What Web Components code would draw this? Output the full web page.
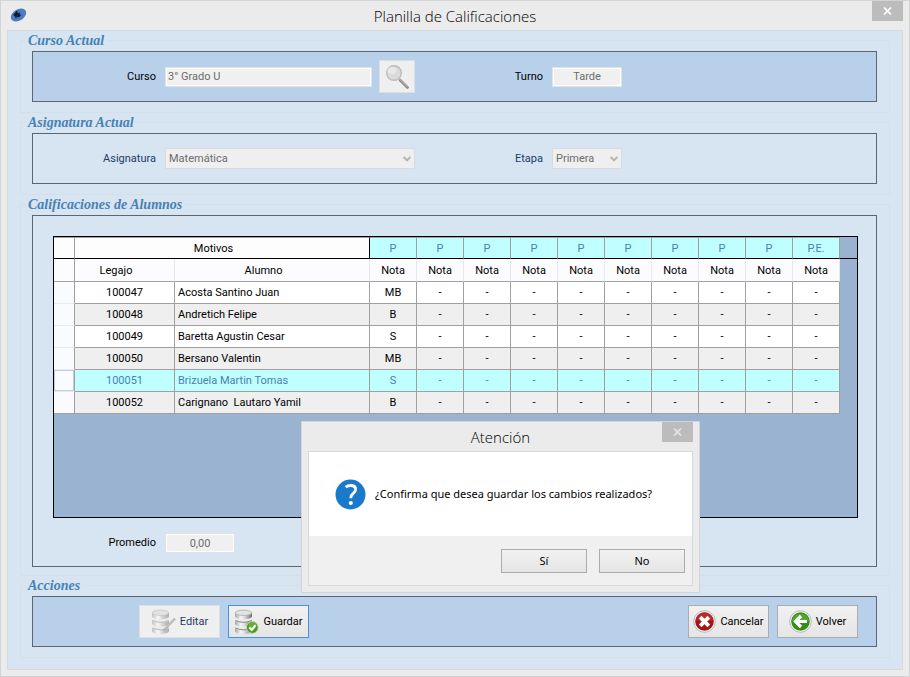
<!DOCTYPE html>
<html lang="es">
<head>
<meta charset="utf-8">
<title>Planilla de Calificaciones</title>
<style>
  body { margin: 0; font-family: Roboto, "Liberation Sans", sans-serif; font-size: 11px; line-height: 16px; color: #000; }
</style>
</head>
<body>
<school-grades-app></school-grades-app>

<script>
const define = (name, html, setup) => {
  const tpl = document.createElement('template');
  tpl.innerHTML = html;
  customElements.define(name, class extends HTMLElement {
    constructor() {
      super();
      this.attachShadow({ mode: 'open' }).append(tpl.content.cloneNode(true));
    }
    connectedCallback() { if (setup) setup(this, this.shadowRoot); }
  });
};

/* Window frame with title bar; used by the main form and by the message box */
define('window-frame', `
<style>
  :host { display: flex; flex-direction: column; box-sizing: border-box; background: #ebebeb; border: 1px solid #d2d4d6; padding: 0 6px 6px; }
  header { display: grid; grid-template-columns: 31px 1fr 31px; height: 29px; flex: none; }
  h1 { margin: 0; align-self: center; text-align: center; font: 300 15px/20px "Open Sans", "Noto Sans", sans-serif; color: #000; white-space: nowrap; }
  button { border: 0; padding: 0; height: 20px; background: #bcbcbc; color: #fff; display: grid; place-items: center; }
  :host([inactive]) button { color: #e6e6e6; }
  .logo { padding: 6px 0 0 3px; }
  main { flex: 1; display: flex; flex-direction: column; border: 1px solid #d5dade; background: var(--client, #d7e4f1); }
</style>
<header>
  <div class="logo"><slot name="logo"></slot></div>
  <h1></h1>
  <button type="button" aria-label="Cerrar"><svg width="9" height="8" viewBox="0 0 9 8"><path d="M1 .5 8 7.5M8 .5 1 7.5" stroke="currentColor" stroke-width="1.7"/></svg></button>
</header>
<main><slot></slot></main>`, (el, r) => { r.querySelector('h1').textContent = el.getAttribute('caption'); });

/* Titled group with an outlined panel inside */
define('group-panel', `
<style>
  :host { display: flex; flex-direction: column; }
  fieldset { flex: 1; display: block; min-width: 0; margin: 0; border: 1px solid #d6dfe6; padding: 1px 12px var(--below, 10px) 11px; }
  legend { padding: 0 4px 0 3px; margin-left: -7px; height: 19px; font: italic bold 14px/19px "Liberation Serif", serif; color: #4682b4; }
  .panel { box-sizing: border-box; min-height: 51px; border: 1px solid #5d656e; background: var(--panel, transparent); display: flex; flex-direction: column; justify-content: center; }
</style>
<fieldset><legend></legend><div class="panel"><slot></slot></div></fieldset>`,
(el, r) => { r.querySelector('legend').textContent = el.getAttribute('caption'); });

/* Row of label/field pairs */
define('field-row', `
<style>
  :host { display: grid; grid-template-columns: 123fr 250fr 119fr 70fr 245fr; column-gap: 9px; align-items: center; }
  :host([short]) { grid-template-columns: 123fr 70fr 632fr; }
</style><slot></slot>`);

define('text-field', `
<style>
  :host { display: contents; }
  label { text-align: right; }
  .area { display: flex; align-items: center; gap: 7px; min-width: 0; }
  input { box-sizing: border-box; flex: 1; min-width: 0; height: 20px; margin: 0; padding: 0 2px; border: 1px solid #dde3ea; box-shadow: inset 0 0 0 1px #fff; border-radius: 0; background: #f0f0f0; color: #6d6d6d; font: inherit; outline: 0; }
  :host([center]) input { text-align: center; }
</style>
<label for="f"></label><div class="area"><input id="f" type="text" disabled><slot></slot></div>`,
(el, r) => {
  r.querySelector('label').textContent = el.getAttribute('label');
  r.querySelector('input').value = el.getAttribute('value');
});

define('select-field', `
<style>
  :host { display: contents; }
  label { text-align: right; color: #1f3b66; }
  .area { display: grid; align-items: center; min-width: 0; }
  select, svg { grid-area: 1 / 1; }
  select { appearance: none; box-sizing: border-box; width: 100%; height: 21px; margin: 0; padding: 0 3px; border: 1px solid #d9dcde; border-radius: 0; background: #efefef; color: #6d6d6d; opacity: 1; font: inherit; }
  svg { justify-self: end; margin-right: 4px; pointer-events: none; }
</style>
<label for="s"></label>
<div class="area"><select id="s" disabled><option></option></select>
<svg width="8" height="6" viewBox="0 0 8 6"><path d="M.7 1 4 4.4 7.3 1" fill="none" stroke="#b4b4b4" stroke-width="2"/></svg></div>`,
(el, r) => {
  r.querySelector('label').textContent = el.getAttribute('label');
  r.querySelector('option').textContent = el.getAttribute('value');
});

/* Push button with an optional icon */
define('push-button', `
<style>
  :host { display: block; width: 81px; height: 33px; }
  button { box-sizing: border-box; width: 100%; height: 100%; display: flex; align-items: center; justify-content: center; gap: 4px; padding: 0 1px; margin: 0; border: 1px solid #acacac; border-radius: 0; background: linear-gradient(#f1f1f1, #e5e5e5); color: #000; font: inherit; white-space: nowrap; }
  button:disabled { background: #efefef; border-color: #dadfe4; color: #1f3b66; }
  :host([focused]) button { border-color: #4a90d9; }
</style>
<button type="button"><slot name="icon"></slot><slot></slot></button>`,
(el, r) => {
  const b = r.querySelector('button');
  b.disabled = el.hasAttribute('off');
  if (el.hasAttribute('hint')) b.setAttribute('aria-label', el.getAttribute('hint'));
});

/* Grades table */
define('grades-table', `
<style>
  :host { display: block; border: 1px solid #000; background: #9ab3d1; height: 280px; }
  table { width: 100%; table-layout: fixed; border-collapse: separate; border-spacing: 0; }
  th, td { box-sizing: border-box; height: 22px; padding: 0; font-weight: 400; text-align: center; line-height: 16px; white-space: pre; border: 0 solid #a0a0a0; border-right-width: 1px; border-bottom-width: 1px; }
  .c-mark { width: 21px; } .c-id { width: 100px; } .c-name { width: 195px; } .c-note { width: 47px; }
  .top th, .top td { border-bottom-color: #000; background: #c0ffff; color: #4682b4; border-top: 1px solid #a0a0a0; padding-top: 1px; }
  .top .corner, .top .motivos { background: #fdfdfd; color: #000; }
  .top .motivos { border-right-color: #000; padding-right: 17px; }
  .sub th { height: 23px; background: #fcfcfe; border-right-color: #e6eaf3; padding-top: 1px; }
  .sub .corner { border-right-color: #a0a0a0; }
  .sub .id, .sub .name { padding-right: 17px; }
  tbody td { background: #fff; }
  tbody tr:nth-child(even) td { background: #efefef; }
  tbody tr td.name { text-align: left; padding-left: 3px; }
  tbody tr td.mark, tbody tr:nth-child(even) td.mark { background: #fafbfe; border-bottom-color: #e6eaf3; }
  tbody tr.sel td { background: #c0ffff; color: #4682b4; }
  tbody tr.sel td.mark { background: #fafbfe; box-shadow: inset 1px 1px #c5cbdc, inset -1px -1px #c5cbdc; }
  tbody tr:last-child td.mark { border-bottom-color: #a0a0a0; }
  tr td.rest, tbody tr:nth-child(even) td.rest, tbody tr.sel td.rest { background: none; border: 0; }
  .top td.rest { border-bottom: 1px solid #000; }
</style>
<table>
  <colgroup><col class="c-mark"><col class="c-id"><col class="c-name"><col class="c-note" span="10"><col></colgroup>
  <thead><tr class="top"></tr><tr class="sub"></tr></thead>
  <tbody></tbody>
</table>`, (el, r) => {
  const ten = f => Array.from({ length: 10 }, (_, i) => f(i)).join('');
  r.querySelector('.top').innerHTML = '<th class="corner"></th><th class="motivos" colspan="2">Motivos</th>' + ten(i => `<th>${i < 9 ? 'P' : 'P.E.'}</th>`) + '<td class="rest"></td>';
  r.querySelector('.sub').innerHTML = '<th class="corner"></th><th class="id">Legajo</th><th class="name">Alumno</th>' + ten(() => '<th>Nota</th>') + '<td class="rest"></td>';
  const rows = [
    ['100047', 'Acosta Santino Juan', 'MB'], ['100048', 'Andretich Felipe', 'B'],
    ['100049', 'Baretta Agustin Cesar', 'S'], ['100050', 'Bersano Valentin', 'MB'],
    ['100051', 'Brizuela Martin Tomas', 'S'], ['100052', 'Carignano  Lautaro Yamil', 'B']];
  r.querySelector('tbody').innerHTML = rows.map(([id, name, n], k) =>
    `<tr${k === 4 ? ' class="sel"' : ''}><td class="mark"></td><td>${id}</td><td class="name">${name}</td>` +
    ten(i => `<td>${i ? '-' : n}</td>`) + '<td class="rest"></td></tr>').join('');
});

/* Confirmation message box */
define('message-box', `
<style>
  :host { display: block; font: 11px/16px "Noto Sans", "Open Sans", sans-serif; }
  window-frame { --client: #f0f0f0; height: 100%; }
  .body { flex: 1; display: flex; align-items: center; gap: 9px; padding: 0 26px; background: #fff; min-height: 84px; }
  p { margin: 0; white-space: nowrap; }
  .foot { display: flex; justify-content: flex-end; gap: 12px; padding: 13px 7px 12px; }
  push-button { width: 86px; height: 24px; }
  svg { flex: none; }
</style>
<window-frame caption="Atención" inactive role="dialog" aria-label="Atención">
  <div class="body">
    <svg width="31" height="31" viewBox="0 0 31 31"><circle cx="15.5" cy="15.5" r="15" fill="#1979ca"/><path d="M10.600 8.200C12.300 6.900 14 6.500 15.800 6.500c3 0 4.800 1.500 4.800 3.900 0 2-1.200 3.100-2.800 4.400-1.400 1.100-1.900 1.900-1.900 3.600v.9" fill="none" stroke="#fff" stroke-width="2.8"/><circle cx="15.8" cy="24" r="2.1" fill="#fff"/></svg>
    <p>¿Confirma que desea guardar los cambios realizados?</p>
  </div>
  <div class="foot"><push-button>Sí</push-button><push-button>No</push-button></div>
</window-frame>`);

/* Stack of database disks shared by the edit and save icons */
const disks = (a, b) => `
  <defs><linearGradient id="m"><stop offset="0" stop-color="${a}"/><stop offset=".35" stop-color="#f8f8f8"/><stop offset=".6" stop-color="#d5d5d5"/><stop offset="1" stop-color="${b}"/></linearGradient></defs>
  <g fill="url(#m)">
    <path d="M1 18.500v3.500c0 1.900 4 3 8.500 3s8.500-1.100 8.500-3v-3.500z"/><ellipse cx="9.500" cy="18.500" rx="8.500" ry="2.400" fill="#ececec"/>
    <path d="M1.500 19q8 3.600 16 0" fill="none" stroke="${b}" stroke-width=".8"/>
    <path d="M1 11v3.500c0 1.900 4 3 8.500 3s8.500-1.100 8.500-3V11z"/><ellipse cx="9.500" cy="11" rx="8.500" ry="2.400" fill="#ececec"/>
    <path d="M1.500 11.500q8 3.600 16 0" fill="none" stroke="${b}" stroke-width=".8"/>
    <path d="M1 3.800v3.500c0 1.900 4 3 8.500 3s8.500-1.100 8.500-3V3.800z"/><ellipse cx="9.500" cy="3.800" rx="8.300" ry="2.700" fill="#e2e2e2" stroke="${a}" stroke-width=".7"/>
  </g>`;

define('app-icon', `<style>:host { display: block; flex: none; } svg { display: block; }</style><div></div>`, (el, r) => {
  const art = {
    logo: ['17', '16', `<ellipse cx="8.500" cy="8" rx="8.300" ry="5.600" transform="rotate(-32 8.500 8)" fill="#4d7dc0"/><path d="M3 8 7 3.500 8 6l2.500-.5-1 2 2 .5-2.500 2.500L7 9.500 6 12 4.500 9z" fill="#142a50"/><path d="m4.500 8.500 3-2.500M7.500 10l2-3" stroke="#0a1220" stroke-width="1.200"/>`],
    search: ['26', '27', `<path d="m16 17 7.500 7.500" stroke="#8b8b8b" stroke-width="2.800" stroke-linecap="round"/><path d="m15.500 16 8 8" stroke="#c4c4c4" stroke-width="1"/><circle cx="10" cy="10" r="7.300" fill="#dadada" stroke="#bcbcbc" stroke-width="1.400"/><ellipse cx="8" cy="7.500" rx="4.500" ry="3.500" fill="#e8e8e8"/>`],
    edit: ['25', '26', disks('#c2c2c2', '#aeaeae') + `<path d="m12.500 21.500 11.500-12" stroke="#b0b0b0" stroke-width="2.200"/><path d="m13.500 20 9.500-10" stroke="#d4d4d4" stroke-width=".8"/>`],
    save: ['25', '26', disks('#a6a6a6', '#6d6d6d') + `<circle cx="18.300" cy="18.500" r="5.900" fill="#4c9a22" stroke="#c7d8bd"/><circle cx="18.300" cy="16.500" r="3.600" fill="#67b23a"/><path d="m15.200 18.500 2.500 2.500 4-4.800" fill="none" stroke="#fff" stroke-width="2"/>`],
    cancel: ['23', '23', `<circle cx="11.500" cy="11.500" r="10.800" fill="#f4f4f4" stroke="#aaa" stroke-width=".8"/><circle cx="11.500" cy="11.500" r="9.300" fill="#a31515"/><path d="M2.800 10a8.800 8.800 0 0 1 17.400 0q-8.700 3-17.400 0z" fill="#b82c2c"/><path d="m7.200 7.200 8.600 8.600m0-8.600-8.600 8.600" stroke="#fff" stroke-width="3.800"/>`],
    back: ['23', '23', `<circle cx="11.500" cy="11.500" r="10.800" fill="#f4f4f4" stroke="#aaa" stroke-width=".8"/><circle cx="11.500" cy="11.500" r="9.300" fill="#358c1b"/><path d="M2.800 11a8.800 8.800 0 0 1 17.400 0q-8.700 3-17.400 0z" fill="#55a52e"/><path d="M12 6 6.500 11.500 12 17M7.500 11.500H18" fill="none" stroke="#fff" stroke-width="3.200"/>`]
  };
  const [w, h, body] = art[el.getAttribute('name')];
  r.querySelector('div').innerHTML = `<svg width="${w}" height="${h}" viewBox="0 0 ${w} ${h}" aria-hidden="true">${body}</svg>`;
});

define('school-grades-app', `
<style>
  :host { display: block; position: relative; }
  .main { min-height: 100vh; }
  .groups { display: flex; flex-direction: column; padding: 0 12px 11px; }
  .blue { --panel: #b9d0ea; }
  .grades { --below: 8px; }
  .search { width: 36px; }
  .sheet { padding: 20px 18px 15px 20px; }
  .average { padding-bottom: 13px; }
  .actions { display: flex; gap: 8px; padding: 0 18px 0 106px; }
  .spacer { flex: 1; }
  .confirm { position: absolute; left: 301px; top: 421px; width: 399px; height: 172px; }
</style>
<window-frame class="main" caption="Planilla de Calificaciones">
  <app-icon slot="logo" name="logo"></app-icon>
  <div class="groups">
    <group-panel class="blue" caption="Curso Actual">
      <field-row>
        <text-field label="Curso" value="3° Grado U"><push-button class="search" off hint="Buscar"><app-icon slot="icon" name="search"></app-icon></push-button></text-field>
        <text-field label="Turno" value="Tarde" center></text-field>
      </field-row>
    </group-panel>
    <group-panel caption="Asignatura Actual">
      <field-row>
        <select-field label="Asignatura" value="Matemática"></select-field>
        <select-field label="Etapa" value="Primera"></select-field>
      </field-row>
    </group-panel>
    <group-panel class="grades" caption="Calificaciones de Alumnos">
      <div class="sheet"><grades-table></grades-table></div>
      <field-row class="average" short>
        <text-field label="Promedio" value="0,00" center></text-field>
      </field-row>
    </group-panel>
    <group-panel class="blue" caption="Acciones">
      <div class="actions">
        <push-button off><app-icon slot="icon" name="edit"></app-icon>Editar</push-button>
        <push-button focused><app-icon slot="icon" name="save"></app-icon>Guardar</push-button>
        <div class="spacer"></div>
        <push-button><app-icon slot="icon" name="cancel"></app-icon>Cancelar</push-button>
        <push-button><app-icon slot="icon" name="back"></app-icon>Volver</push-button>
      </div>
    </group-panel>
  </div>
</window-frame>
<message-box class="confirm"></message-box>`);
</script>
</body>
</html>
